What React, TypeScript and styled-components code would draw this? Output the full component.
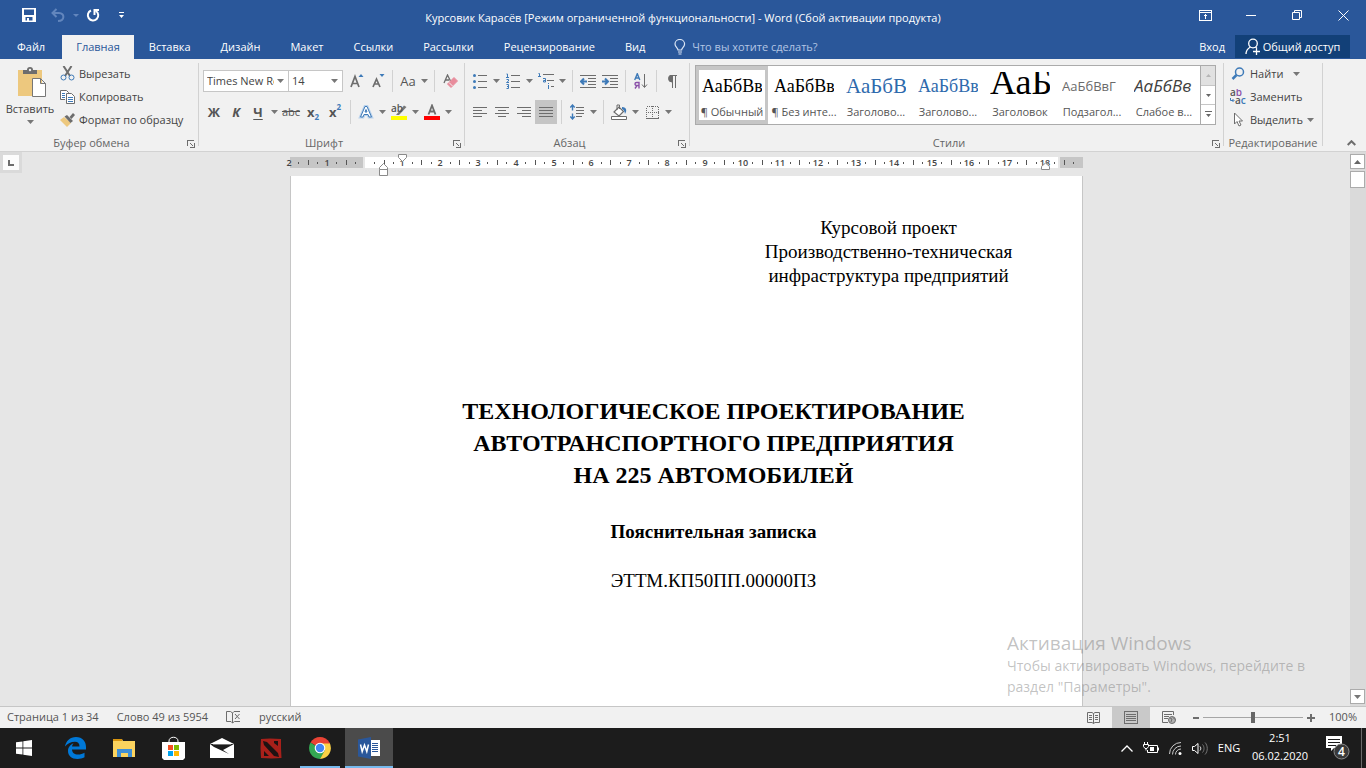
import React from "react";
import styled, { createGlobalStyle, css } from "styled-components";

const BLUE = "#2a579a";
const GRAY = "#6d6d6d";
const ACCENT = "#3e7ab8";
const UI = '"Open Sans", "Noto Sans", sans-serif';
const SERIF = '"Liberation Serif", serif';

const GlobalStyle = createGlobalStyle`
  *, *::before, *::after { box-sizing: border-box; }
  body { margin: 0; font: 11px/16px ${UI}; color: #444; background: #e6e6e6; }
  button, select, input { font: inherit; color: inherit; margin: 0; }
  button { border: 0; background: none; padding: 0; white-space: nowrap; }
  svg { display: block; flex: none; }
`;

const Screen = styled.div`
  position: relative;
  display: flex;
  flex-direction: column;
  height: 100vh;
  overflow: hidden;
`;

/* ---------- title bar and tabs ---------- */

const TitleBar = styled.header`
  display: grid;
  grid-template-columns: 1fr auto 1fr;
  align-items: center;
  height: 35px;
  background: ${BLUE};
  color: #fff;
`;

const QuickAccess = styled.div`
  display: flex;
  align-items: center;
  padding: 0 0 5px 18px;
`;

const QuickButton = styled.button<{ $w: number; $dim?: boolean }>`
  display: flex;
  justify-content: center;
  width: ${(p) => p.$w}px;
  color: ${(p) => (p.$dim ? "#6286bd" : "#fff")};
`;

const WindowTitle = styled.h1`
  margin: 0;
  font-size: 11px;
  font-weight: 400;
`;

const WindowButtons = styled.div`
  display: flex;
  justify-content: flex-end;
  padding-bottom: 5px;
`;

const WindowButton = styled.button`
  display: flex;
  align-items: center;
  justify-content: center;
  width: 46px;
  height: 30px;
`;

const TabBar = styled.nav`
  display: flex;
  height: 24px;
  background: ${BLUE};
  color: #fff;
`;

const Tab = styled.button<{ $active?: boolean; $file?: boolean }>`
  height: 24px;
  padding: 0 ${(p) => (p.$file ? 17 : 15)}px;
  ${(p) => p.$active && css`background: #f1f1f1; color: ${BLUE}; padding: 0 14px;`}
`;

const TellMe = styled.label`
  display: flex;
  align-items: center;
  gap: 6px;
  flex: 1;
  padding-left: 14px;
  input {
    width: 160px;
    border: 0;
    padding: 0;
    background: none;
    outline: 0;
  }
  input::placeholder { color: #b4c6e4; opacity: 1; }
`;

const SignIn = styled.button`
  padding: 0 10px;
`;

const Share = styled.button`
  display: flex;
  align-items: center;
  justify-content: center;
  gap: 2px;
  width: 115px;
  height: 23px;
  margin-right: 16px;
  background: #124078;
`;

/* ---------- ribbon ---------- */

const Ribbon = styled.section`
  display: flex;
  height: 93px;
  background: #f1f1f1;
  border-bottom: 1px solid #d2d2d2;
`;

const Group = styled.div<{ $w?: number }>`
  display: flex;
  flex-direction: column;
  ${(p) => (p.$w ? css`width: ${p.$w}px; flex: none;` : css`flex: 1; min-width: 0;`)}
`;

const GroupBody = styled.div`
  flex: 1;
  min-height: 0;
`;

const Caption = styled.div`
  display: flex;
  align-items: center;
  height: 16px;
  color: #666;
  span { flex: 1; text-align: center; }
`;

const Launcher = styled.button`
  width: 15px;
  height: 10px;
  padding: 1px 0 0 4px;
`;

const GroupSeparator = styled.div`
  width: 1px;
  margin: 4px 0 5px;
  background: #d2d2d2;
`;

const RibbonEnd = styled.div`
  display: flex;
  align-items: flex-end;
  justify-content: flex-end;
  width: 43px;
  padding: 0 10px 5px 0;
`;

const ClipboardBody = styled(GroupBody)`
  display: flex;
`;

const PasteButton = styled.button`
  display: flex;
  flex-direction: column;
  align-items: center;
  width: 60px;
  padding-top: 8px;
  gap: 3px;
`;

const CommandList = styled.div`
  display: flex;
  flex-direction: column;
  padding-top: 3px;
`;

const Command = styled.button`
  display: flex;
  align-items: center;
  gap: 4px;
  height: 23px;
`;

const ToolRows = styled(GroupBody)`
  display: grid;
  grid-template-rows: 22px 24px;
  row-gap: 8px;
  padding: 11px 0 0 4px;
`;

const ToolRow = styled.div`
  display: flex;
`;

const Tool = styled.button<{ $on?: boolean; $w?: number }>`
  display: flex;
  align-items: center;
  justify-content: center;
  width: ${(p) => p.$w || 22}px;
  background: ${(p) => (p.$on ? "#c5c5c5" : "none")};
`;

const Glyph = styled(Tool)<{ $b?: boolean; $i?: boolean; $u?: boolean; $s?: boolean }>`
  font-size: ${(p) => (p.$s ? 11 : 13)}px;
  font-weight: ${(p) => (p.$b ? 700 : 400)};
  font-style: ${(p) => (p.$i ? "italic" : "normal")};
  text-decoration: ${(p) => (p.$s ? "line-through" : p.$u ? "underline" : "none")};
  text-underline-offset: 2px;
  color: #555;
  sub, sup {
    font-size: 8px;
    line-height: 8px;
    color: ${ACCENT};
  }
  sub { align-self: flex-end; padding-bottom: 3px; }
  sup { align-self: flex-start; padding-top: 3px; }
`;

const Divider = styled.div`
  width: 1px;
  margin: 0 4px;
  background: #d2d2d2;
`;

const Combo = styled.label<{ $w: number }>`
  display: flex;
  align-items: center;
  width: ${(p) => p.$w}px;
  margin-right: -1px;
  padding-right: 4px;
  background: #fff;
  border: 1px solid #c6c6c6;
  select {
    flex: 1;
    min-width: 0;
    appearance: none;
    border: 0;
    padding: 0 3px;
    background: none;
    outline: 0;
    text-overflow: clip;
  }
`;

const ComboGap = styled.div`
  width: 4px;
`;

const StylesBody = styled(GroupBody)`
  padding: 6px 7px 0 5px;
`;

const Gallery = styled.div`
  display: flex;
  height: 60px;
  background: #fff;
  border: 1px solid #ababab;
`;

const StyleItem = styled.button<{ $on?: boolean }>`
  flex: 1;
  min-width: 0;
  padding: 2px 3px 0;
  border: 4px solid ${(p) => (p.$on ? "#c6c6c6" : "transparent")};
  border-width: 4px 3px;
`;

const Sample = styled.span<{ $font: string; $size: number; $color?: string; $lh?: number; $italic?: boolean }>`
  display: block;
  height: 24px;
  overflow: hidden;
  text-align: left;
  font-family: ${(p) => p.$font};
  font-size: ${(p) => p.$size}px;
  font-style: ${(p) => (p.$italic ? "italic" : "normal")};
  line-height: ${(p) => p.$lh || 28}px;
  color: ${(p) => p.$color || "#000"};
`;

const StyleName = styled.span`
  display: flex;
  justify-content: center;
  margin: 7px -6px 0;
  line-height: 17px;
  color: #555;
`;

const GalleryScroll = styled.div`
  display: flex;
  flex-direction: column;
  width: 15px;
  border-left: 1px solid #ababab;
  button {
    display: flex;
    align-items: center;
    justify-content: center;
    flex: 1;
  }
  button + button { border-top: 1px solid #c6c6c6; }
  button:first-child { background: #e1e1e1; }
`;

const EditingBody = styled(GroupBody)`
  padding-left: 6px;
`;

/* ---------- work area ---------- */

const WorkArea = styled.main`
  display: flex;
  flex: 1;
  min-height: 0;
  background: #e6e6e6;
`;

const TabStopCorner = styled.div`
  width: 22px;
  height: 21px;
  padding: 3px;
  background: #dadada;
  button {
    display: flex;
    align-items: center;
    justify-content: center;
    width: 16px;
    height: 15px;
    background: #fcfcfc;
  }
`;

const Canvas = styled.div`
  display: flex;
  flex-direction: column;
  align-items: center;
  flex: 1;
  min-width: 0;
  overflow: hidden;
`;

const RulerArt = styled.svg`
  overflow: visible;
  text { font: 600 9px ${UI}; fill: #444; text-anchor: middle; }
`;

const Page = styled.article`
  flex: 1 0 auto;
  width: 793px;
  min-height: 1100px;
  padding: 40px 37px 0 92px;
  background: #fff;
  border: solid #c6c6c6;
  border-width: 0 1px;
  color: #000;
  font: 19px/24px ${SERIF};
  text-align: center;
  p { margin: 0; }
`;

const Approval = styled.p`
  && { margin-left: 350px; }
`;

const DocTitle = styled.h2`
  margin: 107px 0 29px;
  font-size: 24px;
  line-height: 32px;
`;

const DocSubtitle = styled.h3`
  margin: 0 0 25px;
  font-size: 19px;
`;

const ScrollBar = styled.div`
  display: flex;
  flex-direction: column;
  width: 16px;
  padding: 2px 1px 2px 0;
  background: #dadada;
`;

const ScrollButton = styled.button`
  display: flex;
  align-items: center;
  justify-content: center;
  height: 15px;
  background: #fff;
  border: 1px solid #ababab;
`;

const ScrollThumb = styled.div`
  height: 17px;
  margin: 2px 0 auto;
  background: #fff;
  border: 1px solid #ababab;
`;

const Watermark = styled.aside`
  position: absolute;
  right: 57px;
  bottom: 71px;
  width: 302px;
  font-size: 14px;
  line-height: 21px;
  white-space: nowrap;
  color: rgba(120, 120, 120, 0.45);
  pointer-events: none;
  strong {
    display: block;
    font-size: 19px;
    font-weight: 400;
    line-height: 24px;
  }
`;

/* ---------- status bar ---------- */

const StatusBar = styled.footer`
  display: flex;
  align-items: center;
  justify-content: space-between;
  height: 22px;
  padding: 0 9px 0 7px;
  background: #f1f1f1;
  border-top: 1px solid #c6c6c6;
  color: #555;
`;

const StatusSide = styled.div<{ $gap?: number }>`
  display: flex;
  align-items: center;
  align-self: stretch;
  gap: ${(p) => p.$gap || 0}px;
  span { padding-bottom: 2px; }
`;

const ViewButton = styled.button<{ $on?: boolean }>`
  display: flex;
  align-items: center;
  justify-content: center;
  align-self: stretch;
  width: 38px;
  background: ${(p) => (p.$on ? "#c9c9c9" : "none")};
`;

const ZoomStep = styled.button`
  display: flex;
  justify-content: center;
  width: 15px;
`;

const ZoomSlider = styled.input`
  width: 100px;
  height: 12px;
  appearance: none;
  background: linear-gradient(#a6a6a6, #a6a6a6) center / 100% 1px no-repeat;
  &::-webkit-slider-thumb {
    appearance: none;
    width: 4px;
    height: 11px;
    background: #666;
  }
`;

const ZoomValue = styled.span`
  width: 39px;
  text-align: right;
`;

/* ---------- taskbar ---------- */

const Taskbar = styled.footer`
  display: flex;
  height: 40px;
  background: #1c1c1c;
  color: #fff;
`;

const TaskButton = styled.button<{ $open?: boolean; $on?: boolean }>`
  display: flex;
  align-items: center;
  justify-content: center;
  width: 48px;
  margin-right: 1px;
  background: ${(p) => (p.$on ? "#4b4b4b" : "none")};
  ${(p) =>
    (p.$open || p.$on) &&
    css`
      background-image: linear-gradient(#76b9ed, #76b9ed);
      background-repeat: no-repeat;
      background-position: bottom;
      background-size: ${p.$on ? "100%" : "40px"} 2px;
    `}
  &:first-child { margin-right: 3px; }
`;

const Tray = styled.div`
  display: flex;
  align-items: center;
  margin-left: auto;
`;

const TrayButton = styled.button<{ $w: number }>`
  display: flex;
  align-items: center;
  justify-content: center;
  width: ${(p) => p.$w}px;
  height: 40px;
`;

const Clock = styled.time`
  width: 68px;
  padding-bottom: 2px;
  text-align: center;
  line-height: 18px;
`;

const ShowDesktop = styled.button`
  width: 5px;
  height: 40px;
  border-left: 1px solid #6a6a6a;
`;

/* ---------- small drawings ---------- */

const Icon = ({ w = 16, h = 16, children, ...rest }: React.SVGProps<SVGSVGElement> & { w?: number; h?: number }) => (
  <svg width={w} height={h} viewBox={`0 0 ${w} ${h}`} fill="none" stroke={GRAY} aria-hidden="true" {...rest}>
    {children}
  </svg>
);

const Down = () => (
  <svg width="7" height="4" viewBox="0 0 7 4" aria-hidden="true"><path d="M0 0h7L3.500 4z" fill="#777" /></svg>
);

const Drop = ({ label }: { label: string }) => <Tool $w={11} aria-label={label}><Down /></Tool>;

const lines = (rows: [number, number, number][]) => rows.map(([x1, x2, y]) => `M${x1} ${y}.5H${x2}`).join("");

const Align = ({ rows }: { rows: [number, number, number][] }) => (
  <Icon w={14} h={12}><path d={lines(rows)} shapeRendering="crispEdges" /></Icon>
);

const PersonPlus = () => (
  <Icon w={16} h={17} stroke="#fff" strokeWidth={1.3}>
    <circle cx="8" cy="5.500" r="4.300" /><path d="M1 16c0-4 2-5.500 4.500-7M10.500 9l1.500 1.500M8 13.500h7M11.500 10v7" />
  </Icon>
);

const launcher = (
  <Icon w={8} h={8} shapeRendering="crispEdges"><path d="M.5 6V.5H6.500M3 3l3.500 3.500M7.500 3v4.500H3" /></Icon>
);

const GroupCaption = ({ text, open = true }: { text: string; open?: boolean }) => (
  <Caption><span>{text}</span>{open && <Launcher aria-label={`${text}: параметры`}>{launcher}</Launcher>}</Caption>
);

const samples = [
  { name: "¶ Обычный", text: "АаБбВвГ", font: SERIF, size: 18, on: true },
  { name: "¶ Без инте...", text: "АаБбВвГ", font: SERIF, size: 18 },
  { name: "Заголово...", text: "АаБбВ", font: SERIF, size: 21, color: "#2e6aad" },
  { name: "Заголово...", text: "АаБбВвГ", font: SERIF, size: 18, color: "#2e6aad" },
  { name: "Заголовок", text: "АаБб", font: SERIF, size: 36, lh: 20 },
  { name: "Подзагол...", text: "АаБбВвГ", font: UI, size: 13, color: "#6a6a6a" },
  { name: "Слабое в...", text: "АаБбВв", font: UI, size: 17, color: "#404040", italic: true },
];

const CM = 37.8;
const Ruler = () => {
  const zero = 74.6;
  const ticks: string[] = [];
  const numbers: number[] = [];
  for (let q = -8; q <= 75; q++) {
    const x = Math.round(zero + (q * CM) / 4);
    if (q % 4 !== 0) ticks.push(q % 2 === 0 ? `M${x}.5 8v5` : `M${x}.5 10v2`);
    else if (q !== 0) numbers.push(q / 4);
  }
  return (
    <RulerArt width="793" height="24" aria-label="Линейка">
      <path d="M0 5h73v11H0zM770 5h23v11h-23z" fill="#c6c6c6" />
      <path d="M75 5h693v11H75z" fill="#fff" />
      <path d={ticks.join("")} stroke="#555" shapeRendering="crispEdges" />
      {numbers.map((n) => <text key={n} x={Math.round(zero + n * CM)} y={14}>{Math.abs(n)}</text>)}
      <g fill="#fff" stroke="#8a8a8a">
        <path d="M108.500 2.500h8v3l-4 4-4-4z" />
        <path d="M89.500 17.500v-2l4-4 4 4v8h-8zM89.500 17.500h8" />
        <path d="M751.500 17.500v-3l4-3.500 4 3.500v3z" />
      </g>
    </RulerArt>
  );
};

export default function App() {
  return (
    <Screen>
      <GlobalStyle />
      <TitleBar>
        <QuickAccess>
          <QuickButton $w={22} aria-label="Сохранить">
            <Icon w={14} h={14} stroke="none"><path fill="currentColor" fillRule="evenodd" d="M0 0h14v14H0zM2 1.500V7h10V1.500zM3.500 9v3.500H5V10h2v2.500h3.500V9z" /></Icon>
          </QuickButton>
          <QuickButton $w={36} $dim aria-label="Отменить">
            <Icon w={14} h={14} stroke="currentColor" strokeWidth={2}><path d="M5.500 1L1.500 5l4 4M2 5h6c6 0 6 8-1 8" /></Icon>
          </QuickButton>
          <QuickButton $w={0} $dim aria-label="Список отмены">
            <Icon w={6} h={3} stroke="none"><path fill="currentColor" d="M0 0h6L3 3z" /></Icon>
          </QuickButton>
          <QuickButton $w={34} aria-label="Повторить">
            <Icon w={14} h={14} stroke="currentColor" strokeWidth={2}><path d="M5 2.500a5.200 5.200 0 1 0 5 .5M8.500 7V2H13" /></Icon>
          </QuickButton>
          <QuickButton $w={22} aria-label="Настройка панели">
            <Icon w={5} h={7} stroke="none"><path fill="currentColor" d="M0 0h5v1H0zM0 3h5L2.500 6z" /></Icon>
          </QuickButton>
        </QuickAccess>
        <WindowTitle>Курсовик Карасёв [Режим ограниченной функциональности] - Word (Сбой активации продукта)</WindowTitle>
        <WindowButtons>
          <WindowButton aria-label="Параметры отображения ленты">
            <Icon w={13} h={11} stroke="#fff" shapeRendering="crispEdges"><path d="M.5.5h12v10H.5zM.5 2.500h12M6.500 4v5M4.500 6.500l2-2 2 2" /></Icon>
          </WindowButton>
          <WindowButton aria-label="Свернуть"><Icon w={10} h={11} stroke="#fff"><path d="M0 5.500h10" /></Icon></WindowButton>
          <WindowButton aria-label="Восстановить"><Icon w={10} h={10} stroke="#fff"><path d="M.5 2.500h7v7h-7zM2.500 2.500v-2h7v7h-2" /></Icon></WindowButton>
          <WindowButton aria-label="Закрыть"><Icon w={11} h={11} stroke="#fff"><path d="M.5.5l10 10M10.500.5l-10 10" /></Icon></WindowButton>
        </WindowButtons>
      </TitleBar>

      <TabBar>
        <Tab $file>Файл</Tab>
        <Tab $active>Главная</Tab>
        {["Вставка", "Дизайн", "Макет", "Ссылки", "Рассылки", "Рецензирование", "Вид"].map((t) => <Tab key={t}>{t}</Tab>)}
        <TellMe>
          <Icon w={12} h={16} stroke="#dce6f5" strokeWidth={1.2}><path d="M4 11c0-2-3-3-3-6a4.800 4.500 0 0 1 9.600 0c0 3-3 4-3 6zM4 13h4M4.500 15h3" /></Icon>
          <input aria-label="Помощник" placeholder="Что вы хотите сделать?" />
        </TellMe>
        <SignIn>Вход</SignIn>
        <Share><PersonPlus />Общий доступ</Share>
      </TabBar>

      <Ribbon>
        <Group $w={198}>
          <ClipboardBody>
            <PasteButton>
              <Icon w={32} h={31} stroke="none">
                <path d="M4 3h24v26H4z" fill="#edc87e" />
                <path d="M9 7V3h4a3 3 0 0 1 6 0h4v4z" fill="#6d6d6d" /><circle cx="16" cy="3" r="1.200" fill="#f1f1f1" />
                <path d="M18.500 11.500h8l5 5v13h-13zM26.500 11.500v5h5" fill="#fff" stroke="#777" />
              </Icon>
              Вставить
              <Down />
            </PasteButton>
            <CommandList>
              <Command>
                <Icon w={15} h={15}><path d="M3.500 0l6.500 10M11.500 0L5 10" strokeWidth="2" /><circle cx="3.500" cy="11.500" r="2.500" stroke={ACCENT} /><circle cx="11.500" cy="11.500" r="2.500" stroke={ACCENT} /></Icon>
                Вырезать
              </Command>
              <Command>
                <Icon w={15} h={14} fill="#fff"><path d="M5 9.500H.5v-9h6l2 2v1" /><path d="M6.500 3.500h5l3 3v7h-8z" /><path d="M2 3.500h3M2 5.500h3M2 7.500h3M8 7.500h5M8 9.500h5M8 11.500h5" stroke={ACCENT} /></Icon>
                Копировать
              </Command>
              <Command>
                <Icon w={15} h={14} stroke="none"><path d="M0 7l4-3 7 6-4 4z" fill="#edc87e" /><path d="M4.500 3.500L7 2l6 6-2.500 2z" fill="#6d6d6d" /><path d="M9.500 4L13 0l2 2-3.500 4z" fill="#6d6d6d" /></Icon>
                Формат по образцу
              </Command>
            </CommandList>
          </ClipboardBody>
          <GroupCaption text="Буфер обмена" />
        </Group>
        <GroupSeparator />

        <Group $w={265}>
          <ToolRows>
            <ToolRow>
              <Combo $w={86}><select aria-label="Шрифт"><option>Times New Roman</option></select><Down /></Combo>
              <Combo $w={55}><select aria-label="Размер шрифта"><option>14</option></select><Down /></Combo>
              <ComboGap />
              <Tool $w={21} aria-label="Увеличить размер">
                <Icon w={14} h={16}><path d="M1 14L5 3.500 9 14M2.500 10.500h5" strokeWidth="1.700" /><path d="M8.500 4h5L11 1z" fill={ACCENT} stroke="none" /></Icon>
              </Tool>
              <Tool $w={21} aria-label="Уменьшить размер">
                <Icon w={14} h={16}><path d="M2 14l3.500-8L9 14M3.500 11h4" strokeWidth="1.700" /><path d="M8.500 1h5L11 4z" fill={ACCENT} stroke="none" /></Icon>
              </Tool>
              <Divider />
              <Glyph aria-label="Регистр">Aa</Glyph><Drop label="Варианты регистра" />
              <Divider />
              <Tool aria-label="Удалить формат">
                <Icon w={15} h={15}><path d="M1 9l3.500-8L7.500 7M2 6h4" strokeWidth="1.300" /><path d="M11 3.500L14.500 7 8 13.500 4.500 10z" fill="#e88c9c" stroke="#e88c9c" /><path d="M6 8.500l3.500 3.500" stroke="#f1f1f1" /></Icon>
              </Tool>
            </ToolRow>
            <ToolRow>
              <Glyph $b>Ж</Glyph>
              <Glyph $b $i>К</Glyph>
              <Glyph $b $u>Ч</Glyph><Drop label="Вид подчёркивания" />
              <Glyph $s>abc</Glyph>
              <Glyph $b>x<sub>2</sub></Glyph>
              <Glyph $b>x<sup>2</sup></Glyph>
              <Divider />
              <Tool aria-label="Текстовые эффекты">
                <Icon w={16} h={16}><path d="M2.500 13L7 2.500h2L13.500 13h-2.500L10 10.500H6L5 13zM7 8h2L8 5.500z" fill="#fff" stroke="#b9d2ec" strokeWidth="3" /><path d="M2.500 13L7 2.500h2L13.500 13h-2.500L10 10.500H6L5 13zM7 8h2L8 5.500z" fill="#fff" stroke={ACCENT} /></Icon>
              </Tool>
              <Drop label="Выбор эффекта" />
              <Tool aria-label="Цвет выделения">
                <Icon w={16} h={16} stroke="none"><path d="M0 12h16v4H0z" fill="#ff0" /><path d="M5 11l8-9.500 2.500 1.500L8 11z" fill="#777" /><text x="0" y="8" fontSize="10" fontWeight="600" fill="#555">ab</text></Icon>
              </Tool>
              <Drop label="Выбор цвета выделения" />
              <Tool aria-label="Цвет текста">
                <Icon w={16} h={16}><path d="M0 12h16v4H0z" fill="red" stroke="none" /><path d="M4.500 10.500L8 1.500l3.500 9M6 7.500h4" strokeWidth="1.800" /></Icon>
              </Tool>
              <Drop label="Выбор цвета текста" />
            </ToolRow>
          </ToolRows>
          <GroupCaption text="Шрифт" />
        </Group>
        <GroupSeparator />

        <Group $w={224}>
          <ToolRows>
            <ToolRow>
              <Tool aria-label="Маркеры">
                <Icon w={14} h={16}><path d="M5 2.500h9M5 8.500h9M5 14.500h9" /><g fill={ACCENT} stroke="none"><circle cx="1.500" cy="2.500" r="1.500" /><circle cx="1.500" cy="8.500" r="1.500" /><circle cx="1.500" cy="14.500" r="1.500" /></g></Icon>
              </Tool>
              <Drop label="Вид маркера" />
              <Tool aria-label="Нумерация">
                <Icon w={14} h={16}><path d="M5 2.500h9M5 8.500h9M5 14.500h9" /><path d="M.5 1h1v4M0 4.500h3M.5 6.500h2v1.500L.5 9.500H3M.5 11.500h2v4h-2M1 13.500h1" stroke={ACCENT} /></Icon>
              </Tool>
              <Drop label="Вид нумерации" />
              <Tool aria-label="Многоуровневый список">
                <Icon w={16} h={16}><path d="M5 1.500h11M9 7.500h7M13 13.500h3" /><path d="M.5.5h1v3M0 3.500h3M5 5.500h2.500v3.500H5.500V7.500h2M10.500 10v1M10.500 12v4" stroke={ACCENT} /></Icon>
              </Tool>
              <Drop label="Вид списка" />
              <Divider />
              <Tool aria-label="Уменьшить отступ">
                <Icon w={16} h={13}><path d="M0 .5h16M8 3.500h8M8 6.500h8M8 9.500h8M0 12.500h16" /><path d="M1.500 6.500H7M4 3.500L1 6.500l3 3" stroke={ACCENT} strokeWidth="2" /></Icon>
              </Tool>
              <Tool aria-label="Увеличить отступ">
                <Icon w={16} h={13}><path d="M0 .5h16M8 3.500h8M8 6.500h8M8 9.500h8M0 12.500h16" /><path d="M0 6.500h5.500M3 3.500l3 3-3 3" stroke={ACCENT} strokeWidth="2" /></Icon>
              </Tool>
              <Divider />
              <Tool aria-label="Сортировка">
                <Icon w={14} h={16}><path d="M.7 7L3.300.7 5.800 7M1.500 5h3.500" stroke={ACCENT} strokeWidth="1.400" /><path d="M5 15.500V9.500H2.500a1.500 1.500 0 0 0 0 3H5M3 12.500l-2 3" stroke="#8a4fa8" strokeWidth="1.400" /><path d="M10.500 1v13M8 11.500l2.500 3 2.500-3" /></Icon>
              </Tool>
              <Divider />
              <Tool aria-label="Непечатаемые знаки">
                <Icon w={10} h={13}><path d="M10 .5H4M5.500 1v12M8.500 1v12" /><path d="M5 0a3.500 3.500 0 0 0 0 7z" fill={GRAY} /></Icon>
              </Tool>
            </ToolRow>
            <ToolRow>
              <Tool aria-label="По левому краю"><Align rows={[[0, 14, 1], [0, 9, 4], [0, 14, 7], [0, 9, 10]]} /></Tool>
              <Tool aria-label="По центру"><Align rows={[[0, 14, 1], [3, 11, 4], [0, 14, 7], [3, 11, 10]]} /></Tool>
              <Tool aria-label="По правому краю"><Align rows={[[0, 14, 1], [5, 14, 4], [0, 14, 7], [5, 14, 10]]} /></Tool>
              <Tool $on aria-label="По ширине"><Align rows={[[0, 14, 1], [0, 14, 4], [0, 14, 7], [0, 14, 10]]} /></Tool>
              <Divider />
              <Tool aria-label="Интервал">
                <Icon w={14} h={16}><path d="M6 3.500h8M6 6.500h8M6 9.500h8M6 12.500h6" /><path d="M2.500 1v5.500M.3 3.500L2.500 1l2.200 2.500M2.500 9.500V15M.3 12.500L2.500 15l2.200-2.500" stroke={ACCENT} strokeWidth="1.400" /></Icon>
              </Tool>
              <Drop label="Выбор интервала" />
              <Divider />
              <Tool aria-label="Заливка">
                <Icon w={17} h={16}><path d="M3 8l5-5 4.500 4.500L8 12z" fill="#fff" strokeWidth="1.200" /><path d="M6 6V1h2.500v4" /><path d="M11 3c5 0 5 4 3 7-.5-3-1-4-3-5z" fill={ACCENT} stroke="none" /><path d="M.5 12.500h15v3H.5z" fill="#fff" /></Icon>
              </Tool>
              <Drop label="Выбор заливки" />
              <Tool aria-label="Границы">
                <Icon w={13} h={13} shapeRendering="crispEdges"><path d="M.5.5h12v12H.5zM6.500 0v12M0 6.500h13" strokeDasharray="1 1" /><path d="M0 12.500h13" /></Icon>
              </Tool>
              <Drop label="Выбор границ" />
            </ToolRow>
          </ToolRows>
          <GroupCaption text="Абзац" />
        </Group>
        <GroupSeparator />

        <Group>
          <StylesBody>
            <Gallery>
              {samples.map((s, i) => (
                <StyleItem key={i} $on={s.on}>
                  <Sample $font={s.font} $size={s.size} $color={s.color} $lh={s.lh} $italic={s.italic}>{s.text}</Sample>
                  <StyleName>{s.name}</StyleName>
                </StyleItem>
              ))}
              <GalleryScroll>
                <button aria-label="Вверх"><Icon w={5} h={3} stroke="none"><path d="M0 3h5L2.500 0z" fill="#b5b5b5" /></Icon></button>
                <button aria-label="Вниз"><Icon w={5} h={3} stroke="none"><path d="M0 0h5L2.500 3z" fill="#666" /></Icon></button>
                <button aria-label="Все стили"><Icon w={7} h={7} stroke="none"><path d="M0 0h7v1H0zM1 3h5L3.500 6z" fill="#666" /></Icon></button>
              </GalleryScroll>
            </Gallery>
          </StylesBody>
          <GroupCaption text="Стили" />
        </Group>
        <GroupSeparator />

        <Group $w={98}>
          <EditingBody>
            <CommandList>
              <Command>
                <Icon w={16} h={14} stroke={ACCENT}><circle cx="9.500" cy="5" r="4" strokeWidth="1.500" /><path d="M6.500 8L2.500 12" strokeWidth="2.500" /></Icon>
                Найти&nbsp;&nbsp;<Down />
              </Command>
              <Command>
                <Icon w={16} h={16} stroke="none" fontSize="10" fontWeight="600">
                  <text x="0" y="7" fill="#555">a<tspan fill="#8a4fa8">b</tspan></text>
                  <text x="5" y="15" fill="#555">a<tspan fill={ACCENT}>c</tspan></text>
                  <path d="M.5 9v2.500h3M2.500 10l1.500 1.500L2.500 13" stroke={ACCENT} />
                </Icon>
                Заменить
              </Command>
              <Command>
                <Icon w={16} h={15}><path d="M4.500 1v11l2.500-2.500 2 4.500 2-1-2-4h3.500z" fill="#fff" /></Icon>
                Выделить<Down />
              </Command>
            </CommandList>
          </EditingBody>
          <GroupCaption text="Редактирование" open={false} />
        </Group>
        <GroupSeparator />
        <RibbonEnd>
          <button aria-label="Свернуть ленту"><Icon w={9} h={6} strokeWidth={2}><path d="M.7 5l3.800-3.800L8.300 5" /></Icon></button>
        </RibbonEnd>
      </Ribbon>

      <WorkArea>
        <TabStopCorner>
          <button aria-label="Тип табуляции"><Icon w={6} h={6} strokeWidth={2}><path d="M1 0v5h5" /></Icon></button>
        </TabStopCorner>
        <Canvas>
          <Ruler />
          <Page>
            <Approval>Курсовой проект<br />Производственно-техническая<br />инфраструктура предприятий</Approval>
            <DocTitle>ТЕХНОЛОГИЧЕСКОЕ ПРОЕКТИРОВАНИЕ<br />АВТОТРАНСПОРТНОГО ПРЕДПРИЯТИЯ<br />НА 225 АВТОМОБИЛЕЙ</DocTitle>
            <DocSubtitle>Пояснительная записка</DocSubtitle>
            <p>ЭТТМ.КП50ПП.00000ПЗ</p>
          </Page>
        </Canvas>
        <ScrollBar>
          <ScrollButton aria-label="Прокрутить вверх"><Icon w={7} h={4} stroke="none"><path d="M0 4h7L3.500 0z" fill="#666" /></Icon></ScrollButton>
          <ScrollThumb />
          <ScrollButton aria-label="Прокрутить вниз"><Down /></ScrollButton>
        </ScrollBar>
      </WorkArea>

      <StatusBar>
        <StatusSide $gap={18}>
          <span>Страница 1 из 34</span>
          <span>Слово 49 из 5954</span>
          <Icon w={15} h={13}><path d="M6.500 12L5 10.500H.5v-10h4L6.500 2v10l2-1.500H14M6.500 2L8 .5h6M9 3l4.500 5M13.500 3L9 8" /></Icon>
          <span>русский</span>
        </StatusSide>
        <StatusSide>
          <ViewButton aria-label="Режим чтения"><Icon w={13} h={12}><path d="M6.500 1.500v10M.5.500h4.500l1.500 1L8 .5h4.500v10H8l-1.500 1-1.500-1H.5zM2 3.500h3M2 5.500h3M2 7.500h3M8 3.500h3M8 5.500h3M8 7.500h3" /></Icon></ViewButton>
          <ViewButton $on aria-label="Разметка страницы"><Icon w={14} h={13} shapeRendering="crispEdges"><path d="M.5.500h13v12H.5zM2 3.500h10M2 5.500h10M2 7.500h10M2 9.500h10" /></Icon></ViewButton>
          <ViewButton aria-label="Веб-документ"><Icon w={14} h={13}><path d="M6 11.500H.5v-11h11V4M2 3.500h8M2 5.500h5M2 7.500h4" /><circle cx="10" cy="9" r="3.500" fill="#b0b0b0" /><path d="M8 7l2 1-1 3M11 6.500l2 2" /></Icon></ViewButton>
          <ZoomStep aria-label="Уменьшить"><Icon w={6} h={8} strokeWidth={2}><path d="M0 4h6" /></Icon></ZoomStep>
          <ZoomSlider type="range" min={0} max={100} defaultValue={50} aria-label="Масштаб" />
          <ZoomStep aria-label="Увеличить"><Icon w={8} h={8} strokeWidth={2}><path d="M0 4h8M4 0v8" /></Icon></ZoomStep>
          <ZoomValue>100%</ZoomValue>
        </StatusSide>
      </StatusBar>

      <Taskbar>
        <TaskButton aria-label="Пуск">
          <Icon w={16} h={16} stroke="none"><path fill="#fff" d="M0 2.300L6.500 1.400v6.100H0zM7.300 1.300L16 0v7.500H7.300zM0 8.400h6.500v6.200L0 13.700zM7.300 8.400H16V16l-8.700-1.300z" /></Icon>
        </TaskButton>
        <TaskButton aria-label="Edge">
          <Icon w={21} h={22} stroke="none"><path fill="#0078d7" d="M0 9.500C1 4 5 0 11 0c6.500 0 10 4.500 10 10v2.500H7c0 3 2.500 5 6 5 2.500 0 4.500-.7 6.500-1.800v4.600C17.500 21.500 15 22 12.500 22 6.500 22 3 18.500 3 14c0-4 2.500-6.500 5.500-7.800C7.500 7.500 7.200 8.500 7.100 9.500h7.400c0-3-1.500-4.800-4.500-4.800-4 0-7.500 1.800-10 4.800z" /></Icon>
        </TaskButton>
        <TaskButton aria-label="Проводник">
          <Icon w={22} h={18} stroke="none"><path d="M0 0h9l1 2h12v16H0z" fill="#fbd35e" /><path d="M0 0h9v2H0z" fill="#d9950f" /><path d="M4 10h15v8h-4v-4H8v4H4z" fill="#3f8fd6" /></Icon>
        </TaskButton>
        <TaskButton aria-label="Магазин">
          <Icon w={23} h={24} stroke="none"><path d="M0 6h23v16l-2 2H2l-2-2z" fill="#fff" /><path d="M7 9V5c0-5 9-5 9 0v4" stroke="#fff" /><path d="M6 9h5v5H6z" fill="#f25022" /><path d="M12 9h5v5h-5z" fill="#7fba00" /><path d="M6 15h5v5H6z" fill="#00a4ef" /><path d="M12 15h5v5h-5z" fill="#ffb900" /></Icon>
        </TaskButton>
        <TaskButton aria-label="Почта">
          <Icon w={24} h={20} stroke="none"><path d="M0 6L12 0l12 6v14H0z" fill="#fff" /><path d="M0 6h24l-11 6 6 4-15-7z" fill="#1c1c1c" /><path d="M3 6h18" stroke="#fff" strokeWidth=".8" /></Icon>
        </TaskButton>
        <TaskButton aria-label="Dota 2">
          <Icon w={22} h={21} stroke="none"><path d="M1 1l9-.5L21 1v9l.5 10-10 .5L1 20 .5 10z" fill="#a8201a" /><path d="M3 3l4 1 11 11 1 4-5-1L4 7zM14 3h4v5l-4-3zM4 13l5 5H4z" fill="#1d1212" /></Icon>
        </TaskButton>
        <TaskButton $open aria-label="Chrome">
          <Icon w={22} h={22} stroke="none">
            <path d="M11 11L1.500 5.500A11 11 0 0 1 20.500 5.500z" fill="#ea4335" />
            <path d="M11 11h-1L1.500 5.500A11 11 0 0 0 11 22l5-8z" fill="#34a853" />
            <path d="M11 6h9.700A11 11 0 0 1 11 22l5-9z" fill="#fbd145" />
            <path d="M11 5.500h9.500l.4 1H11z" fill="#ea4335" />
            <circle cx="11" cy="11" r="5.300" fill="#fff" /><circle cx="11" cy="11" r="4.200" fill="#4285f4" />
          </Icon>
        </TaskButton>
        <TaskButton $on aria-label="Word">
          <Icon w={22} h={22} stroke="none"><path d="M12 3h10v16H12z" fill="#fff" /><path d="M14 6.500h6M14 8.500h6M14 10.500h6M14 12.500h6M14 14.500h6" stroke={BLUE} /><path d="M0 2.500L13 0v22L0 19.500z" fill={BLUE} /><path d="M2.500 7.500l1.700 7 2.300-6.500 2.300 6.500 1.700-7" stroke="#fff" strokeWidth="1.500" /></Icon>
        </TaskButton>
        <Tray>
          <TrayButton $w={24} aria-label="Скрытые значки"><Icon w={12} h={7} stroke="#fff" strokeWidth={1.3}><path d="M.5 6.500L6 1l5.500 5.500" /></Icon></TrayButton>
          <TrayButton $w={24} aria-label="Батарея"><Icon w={16} h={12} stroke="#fff"><path d="M6 3.500h8.500v7H4.500V8M15.500 5.500v3M1.500 0v2M4.500 0v2M.5 2.500h5v2l-1.500 2h-2l-1.500-2zM3 6.500v2" /><path d="M7 5h4v4H7z" fill="#fff" stroke="none" /></Icon></TrayButton>
          <TrayButton $w={25} aria-label="Сеть"><Icon w={13} h={13} stroke="#fff"><path d="M.5 12A11.500 11.500 0 0 1 12 .5M3.500 12.500A8.500 8.500 0 0 1 12 4M6.500 12.500A5.500 5.500 0 0 1 12 7" stroke="#ccc" /><circle cx="11" cy="11.500" r="1.500" fill="#fff" stroke="none" /></Icon></TrayButton>
          <TrayButton $w={24} aria-label="Громкость"><Icon w={16} h={13} stroke="#fff"><path d="M.5 4.500h2l3.500-3v10l-3.500-3h-2zM8 4.500c1 1 1 3 0 4" /><path d="M10.500 2.500c2 2 2 6 0 8M13 .5c3 3 3 9 0 12" stroke="#777" /></Icon></TrayButton>
          <TrayButton $w={34}>ENG</TrayButton>
          <Clock>2:51<br />06.02.2020</Clock>
          <TrayButton $w={47} aria-label="Уведомления">
            <Icon w={24} h={24} stroke="none">
              <path d="M0 0h16v12H8l-3 3v-3H0z" fill="#fff" /><path d="M2 3.500h12M2 6.500h12M2 9.500h8" stroke="#1c1c1c" />
              <circle cx="15.500" cy="15.500" r="7.500" fill="#3a3a3a" stroke="#8a8a8a" /><text x="12" y="20" fontSize="12" fontWeight="600" fill="#fff">4</text>
            </Icon>
          </TrayButton>
          <ShowDesktop aria-label="Свернуть все окна" />
        </Tray>
      </Taskbar>
      <Watermark><strong>Активация Windows</strong>Чтобы активировать Windows, перейдите в<br />раздел "Параметры".</Watermark>
    </Screen>
  );
}
